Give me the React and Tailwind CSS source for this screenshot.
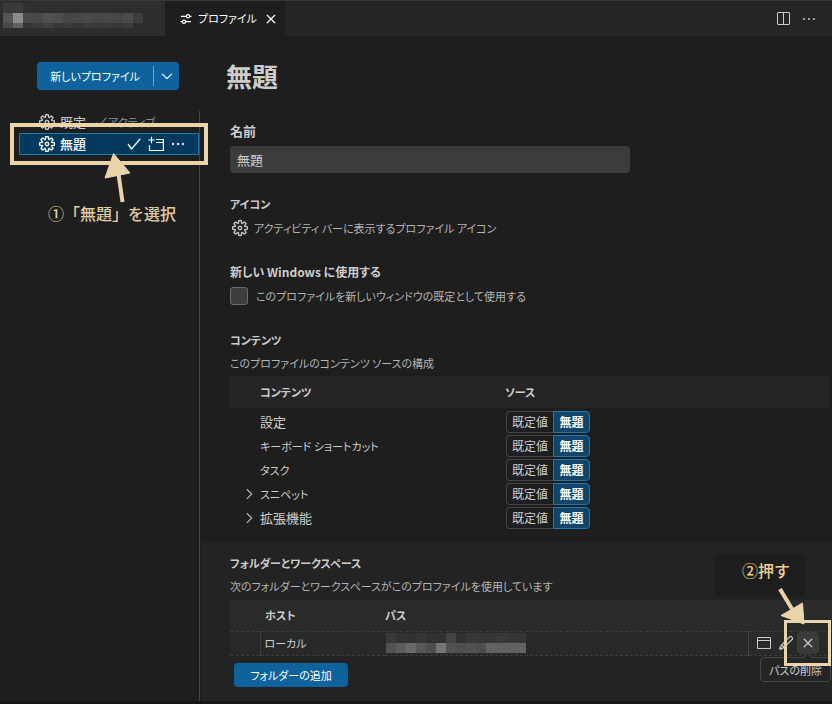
import React from "react";
import {
  VscSettingsGear,
  VscCheck,
  VscEllipsis,
  VscClose,
  VscChevronDown,
  VscChevronRight,
  VscSplitHorizontal,
  VscEdit,
} from "react-icons/vsc";

const contents = [
  { id: "settings", label: "設定", size: "text-[13px]", nested: false },
  { id: "keyboard", label: "キーボード ショートカット", size: "text-[11px]", nested: false },
  { id: "tasks", label: "タスク", size: "text-[11px]", nested: false },
  { id: "snippets", label: "スニペット", size: "text-[11px]", nested: true },
  { id: "extensions", label: "拡張機能", size: "text-[13px]", nested: true },
];

// Two sliders with round knobs: the profile editor's icon
function ProfileIcon() {
  return (
    <svg className="shrink-0" width="12" height="12" viewBox="0 0 12 12" fill="none" stroke="currentColor" strokeWidth="1.2" aria-hidden="true">
      <path d="M1 3.3H6.3M9.7 3.3H11.5M0.5 8.7H2.3M5.7 8.7H11" />
      <circle cx="8" cy="3.3" r="1.6" />
      <circle cx="4" cy="8.700" r="1.6" />
    </svg>
  );
}

// Window outline with a plus in its corner
function NewWindowIcon() {
  return (
    <svg width="16" height="16" viewBox="0 0 16 16" fill="none" stroke="currentColor" strokeWidth="1.2" aria-hidden="true">
      <path d="M3.5 0.8V7.2M0.3 4H6.7M8 3.500H15.400V14.500H1.500V9M8 6.500H15.400" />
    </svg>
  );
}

function WindowIcon() {
  return (
    <svg width="16" height="16" viewBox="0 0 16 16" fill="none" stroke="currentColor" aria-hidden="true">
      <path d="M1.5 2.5H14.5V13.5H1.5ZM1.5 5.5H14.5" />
    </svg>
  );
}

// Pixelated block that hides a private name
function Mosaic({ rows, size, className }) {
  const columns = Math.max(...rows.map((row) => row.length));
  return (
    <svg
      className={className}
      width={columns * size}
      height={rows.length * size}
      shapeRendering="crispEdges"
      aria-hidden="true"
    >
      {rows.map((row, y) =>
        row.map((tone, x) => (
          <rect key={`${x}-${y}`} x={x * size} y={y * size} width={size} height={size} fill={tone} />
        ))
      )}
    </svg>
  );
}

const tabTones = [
  ["#3a3a3a", "#3a3a3a", "#303030", "#2d2d2d", "#2d2d2d", "#2d2d2d", "#2d2d2d", "#2d2d2d", "#2d2d2d", "#2d2d2d", "#2d2d2d", "#2d2d2d", "#2d2d2d", "#2d2d2d"],
  ["#555555", "#8c8c8c", "#4a4a4a", "#484848", "#505050", "#4e4e4e", "#454545", "#474747", "#494949", "#474747", "#494949", "#464646", "#4b4b4b", "#3d3d3d"],
];
const tabTonesLow = [
  ["#474747", "#474747", "#606060", "#606060", "#353535", "#353535", "#3b3b3b", "#3b3b3b", "#404040", "#404040", "#363636", "#363636", "#3c3c3c", "#3c3c3c", "#343434", "#343434", "#3b3b3b", "#3b3b3b", "#383838", "#383838", "#3a3a3a", "#3a3a3a", "#363636", "#363636", "#3a3a3a", "#3a3a3a"],
];
const pathTones = [
  ["#383939", "#313333", "#303232", "#343535", "#303232", "#303232", "#424343", "#303232", "#363838", "#353737", "#343636", "#383939", "#353737", "#343636"],
  ["#525353", "#5c5d5d", "#686969", "#565757", "#4d4e4e", "#747575", "#505151", "#4d4e4e", "#505151", "#4d4e4e", "#616262", "#606161", "#606161", "#626363"],
];

function SectionTitle({ children }) {
  return <h2 className="h-5 text-[11px] leading-5 font-bold text-[#cccccc]">{children}</h2>;
}

function SourceToggle({ label }) {
  return (
    <div role="group" aria-label={label} className="flex h-[22px] w-[84px] text-xs">
      <button className="flex-1 rounded-l-sm border border-r-0 border-[#454545] text-[#cccccc]">既定値</button>
      <button className="w-[37px] rounded-r-sm border border-[#2277ad] bg-[#12456b] font-bold text-white">無題</button>
    </div>
  );
}

function TabBar() {
  return (
    <header className="flex h-9 items-stretch border-t border-[#383838] bg-[#252526] text-[#cccccc]">
      <button aria-label="エディター" className="flex w-[165px] flex-col bg-[#2d2d2d] pt-0.5 pl-[3px]">
        <Mosaic rows={tabTones} size={10} />
        <Mosaic rows={tabTonesLow} size={5} />
      </button>
      <div className="flex w-[120px] items-center bg-[#1e1e1e] pl-[15px] text-[11px] text-white">
        <ProfileIcon />
        <span className="flex-1 pl-[6px] whitespace-nowrap">プロファイル</span>
        <button aria-label="閉じる" className="mr-[6px] text-base">
          <VscClose className="stroke-[0.4]" />
        </button>
      </div>
      <div className="ml-auto flex items-center gap-[10px] pr-[15px] text-base">
        <button aria-label="エディターを分割">
          <VscSplitHorizontal />
        </button>
        <button aria-label="その他">
          <VscEllipsis />
        </button>
      </div>
    </header>
  );
}

function Sidebar() {
  return (
    <aside className="flex w-[200px] shrink-0 flex-col pt-[26px] text-[13px]">
      <div className="ml-[37px] flex h-7 w-[142px] items-center rounded-sm bg-[#0e639c] text-white">
        <button className="h-full flex-1 text-[11px] whitespace-nowrap">新しいプロファイル</button>
        <button aria-label="その他のオプション" className="flex h-5 w-[26px] items-center justify-center border-l border-[#6aa3c8] text-base">
          <VscChevronDown className="stroke-[0.3]" />
        </button>
      </div>
      <ul className="mt-[21px] ml-[19px] flex-1 border-r border-[#444444]">
        <li className="flex h-[22px] items-center pl-5 text-[#cccccc]">
          <VscSettingsGear className="stroke-[0.3] text-base" />
          <span className="pl-[5px]">既定</span>
          <span className="flex items-center pl-2 text-[11px] text-[#8f8f8f]">
            <VscCheck className="text-sm" />
            アクティブ
          </span>
        </li>
        <li className="flex h-[22px] items-center border border-[#2277ad] bg-[#04395e] pl-[19px] text-white">
          <VscSettingsGear className="stroke-[0.3] text-base" />
          <span className="flex-1 pl-[5px] font-medium">無題</span>
          <span className="flex items-center gap-[6px] pr-3 text-base">
            <button aria-label="アクティブにする">
              <VscCheck className="stroke-[0.5]" />
            </button>
            <button aria-label="新しいウィンドウ">
              <NewWindowIcon />
            </button>
            <button aria-label="その他の操作">
              <VscEllipsis className="stroke-[0.4]" />
            </button>
          </span>
        </li>
      </ul>
    </aside>
  );
}

function ContentsTable() {
  return (
    <table className="mt-[3px] ml-[30px] w-[calc(100%_-_32px)] table-fixed border-collapse text-left text-[13px]">
      <thead>
        <tr className="h-8 bg-[#252526] text-[11px]">
          <th className="w-[275px] p-0 pl-[30px] font-bold">コンテンツ</th>
          <th className="p-0 font-bold">ソース</th>
        </tr>
      </thead>
      <tbody>
        {contents.map((row, index) => (
          <tr key={row.id} className={index === 0 ? "h-[26px]" : "h-6"}>
            <td className={index === 0 ? "p-0 pt-0.5" : "p-0"}>
              <div className="flex items-center">
                <span className="flex w-[30px] justify-center pl-2 text-base">
                  {row.nested && <VscChevronRight aria-hidden="true" className="stroke-[0.3]" />}
                </span>
                <span className={row.size}>{row.label}</span>
              </div>
            </td>
            <td className={index === 0 ? "p-0 pt-0.5 pl-px" : "p-0 pl-px"}>
              <SourceToggle label={row.label} />
            </td>
          </tr>
        ))}
      </tbody>
    </table>
  );
}

function FoldersTable() {
  return (
    <table className="mt-1 ml-7 w-[calc(100%_-_28px)] table-fixed border-collapse text-left text-[11px]">
      <thead>
        <tr className="h-[31px] bg-[#292a2a]">
          <th className="w-[30px] p-0" />
          <th className="w-[125px] p-0 pl-[5px] font-bold">ホスト</th>
          <th className="p-0 font-bold">パス</th>
          <th className="w-[84px] p-0" />
        </tr>
      </thead>
      <tbody>
        <tr className="h-6 border-y border-dashed border-[#3c3d3d] bg-[#282a2a]">
          <td className="border-r border-r-[#3c3d3d] p-0 [border-right-style:solid]" />
          <td className="p-0 pl-1">ローカル</td>
          <td className="p-0 pl-px">
            <Mosaic rows={pathTones} size={10} />
          </td>
          <td className="border-l border-l-[#454545] p-0 [border-left-style:solid]">
            <div className="flex items-center gap-[6px] pl-[7px] text-base">
              <button aria-label="新しいウィンドウで開く">
                <WindowIcon />
              </button>
              <button aria-label="パスの編集">
                <VscEdit className="stroke-[0.3]" />
              </button>
              <button aria-label="パスの削除" className="-ml-[3px] flex h-[22px] w-[22px] items-center justify-center rounded bg-[#3a3b3b]">
                <VscClose className="stroke-[0.4]" />
              </button>
            </div>
          </td>
        </tr>
      </tbody>
    </table>
  );
}

function Annotations() {
  return (
    <div className="text-base leading-6 font-medium whitespace-nowrap [font-feature-settings:normal]">
      <div className="pointer-events-none absolute top-[123px] left-[10px] h-[42px] w-[198px] border-4 border-[#ebd3aa]" />
      <svg className="pointer-events-none absolute top-[152px] left-[104px]" width="28" height="52" viewBox="0 0 28 52" aria-hidden="true">
        <path d="M14.500 22L18.500 50" stroke="#ebd3aa" strokeWidth="4" />
        <path d="M9.500 1.500L26 21L1 26Z" fill="#ebd3aa" stroke="#ebd3aa" strokeWidth="1" strokeLinejoin="round" />
      </svg>
      <p className="pointer-events-none absolute top-[201px] left-[48px] text-[#e2cda3]">①「無題」を選択</p>
      <p className="pointer-events-none absolute top-[554px] right-[27px] h-[43px] w-[90px] bg-[#1e1e1e] pt-1 pl-[27px] text-[#ebd08f]">
        ②押す
      </p>
      <div
        role="tooltip"
        className="absolute top-[657px] right-px flex h-[25px] w-[71px] items-center justify-center rounded-sm border border-[#454545] bg-[#252526] text-[11px] font-normal text-[#cccccc] [font-feature-settings:'palt']"
      >
        パスの削除
        <span className="absolute -top-[4px] right-[19px] h-[7px] w-[7px] rotate-45 border-t border-l border-[#454545] bg-[#252526]" />
      </div>
      <div className="pointer-events-none absolute top-[620px] right-px h-[46px] w-[47px] border-[3px] border-[#ebd3aa]" />
      <svg className="pointer-events-none absolute top-[586px] right-[26px]" width="30" height="40" viewBox="0 0 30 40" aria-hidden="true">
        <path d="M4 3L16 23" stroke="#ebd3aa" strokeWidth="4" />
        <path d="M5 29.500L26.500 17L28 38Z" fill="#ebd3aa" stroke="#ebd3aa" strokeWidth="1" strokeLinejoin="round" />
      </svg>
    </div>
  );
}

export default function App() {
  return (
    <div className="relative flex min-h-screen flex-col bg-[#1e1e1e] font-['Noto_Sans_CJK_JP',sans-serif] text-[#cccccc] [font-feature-settings:'palt']">
      <TabBar />
      <div className="flex flex-1 items-stretch">
        <Sidebar />
        <main className="min-w-0 flex-1 pt-5 text-[11px] leading-5">
          <div className="pl-[30px]">
            <h1 className="-ml-1 text-[26px] leading-10 font-bold">無題</h1>
            <label htmlFor="profile-name" className="mt-[25px] block h-5 text-[13px] font-bold">
              名前
            </label>
            <input
              id="profile-name"
              defaultValue="無題"
              className="mt-[5px] block h-[27px] w-full max-w-[400px] rounded-sm bg-[#3c3c3c] px-[7px] text-[13px] outline-none"
            />
            <div className="mt-[21px]">
              <SectionTitle>アイコン</SectionTitle>
              <button className="mt-1 flex h-5 items-center gap-[6px] text-[#b4b4b4]">
                <VscSettingsGear className="ml-0.5 stroke-[0.3] text-base text-[#cccccc]" />
                アクティビティ バーに表示するプロファイル アイコン
              </button>
            </div>
            <div className="mt-6">
              <SectionTitle>
                <span className="text-xs leading-5">新しい Windows に使用する</span>
              </SectionTitle>
              <label className="mt-1 flex h-5 items-center gap-2 text-[#b4b4b4]">
                <input type="checkbox" className="h-[18px] w-[18px] appearance-none rounded-[3px] border border-[#6b6b6b] bg-[#3c3c3c]" />
                このプロファイルを新しいウィンドウの既定として使用する
              </label>
            </div>
            <div className="mt-6">
              <SectionTitle>コンテンツ</SectionTitle>
              <p className="mt-[3px] text-[#b4b4b4]">このプロファイルのコンテンツ ソースの構成</p>
            </div>
          </div>
          <ContentsTable />
          <section className="mt-3 ml-0.5 bg-[#232324] pt-[11px] pb-[14px]">
            <div className="pl-7">
              <SectionTitle>フォルダーとワークスペース</SectionTitle>
              <p className="mt-[3px] text-[#b4b4b4]">次のフォルダーとワークスペースがこのプロファイルを使用しています</p>
            </div>
            <FoldersTable />
            <button className="mt-[7px] ml-8 block h-6 w-[114px] rounded-sm bg-[#0e639c] text-white">フォルダーの追加</button>
          </section>
        </main>
      </div>
      <footer className="h-[3px] bg-[#1a151a]" />
      <Annotations />
    </div>
  );
}
